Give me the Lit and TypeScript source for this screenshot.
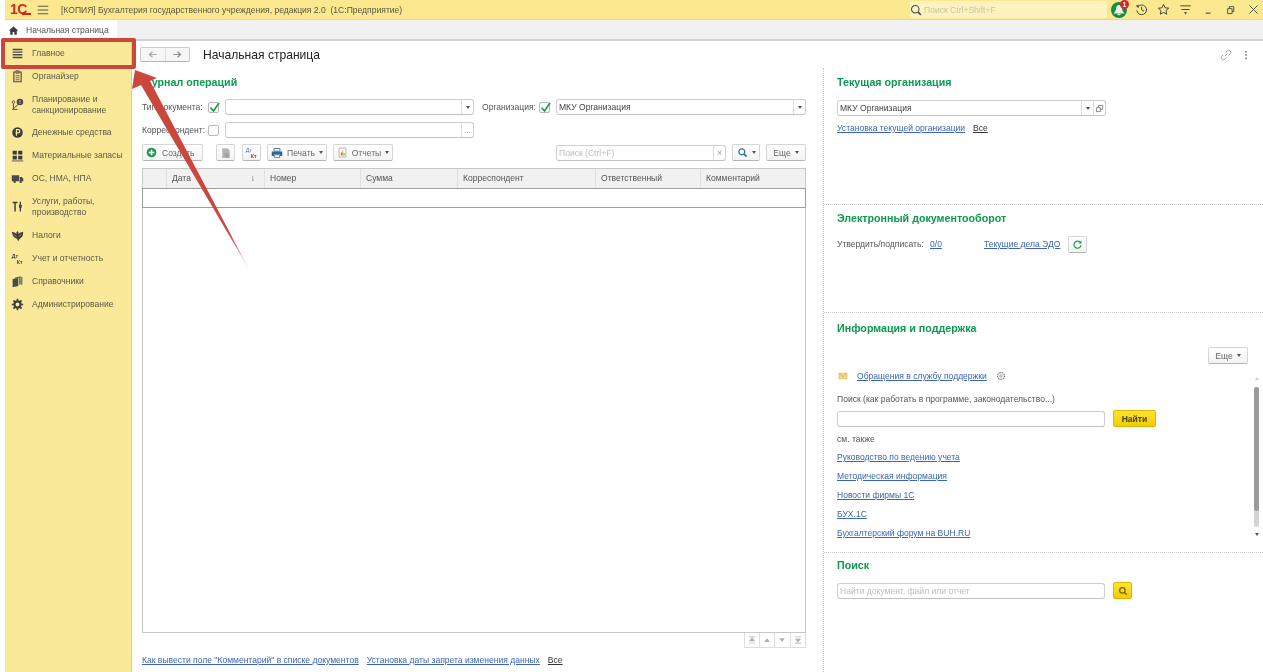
import { LitElement, html, css, svg } from 'lit';
import { customElement } from 'lit/decorators.js';

// small helper so every icon has the same svg wrapper
const ico = (size: number, body: unknown) => html`<svg class="ico" width=${size} height=${size} viewBox="0 0 16 16">${body}</svg>`;

const icons: Record<string, unknown> = {
  main: svg`<path d="M2 3h12M2 6.300h12M2 9.600h12M2 13h12" stroke="#4a4a4a" stroke-width="1.700"/>`,
  org: svg`<path d="M3.500 2.500h9v12h-9z" fill="none" stroke="#4a4a4a" stroke-width="1.400"/><path d="M6 1h4v3H6zM5.500 7h5M5.500 9.500h5M5.500 12h5" fill="none" stroke="#4a4a4a"/>`,
  plan: svg`<path d="M3 7v7M1.500 14H8M4 12l5-4" stroke="#4a4a4a" fill="none" stroke-width="1.200"/><circle cx="3" cy="5" r="1.600" fill="none" stroke="#4a4a4a"/><circle cx="11" cy="5" r="4" fill="#4a4a4a"/><path d="M11 2.800V5.500M11 6.200v1" stroke="#fbe99a"/>`,
  money: svg`<circle cx="8" cy="8" r="6.500" fill="#3d3d3d"/><path d="M6.700 12V4.500h2.200a1.900 1.900 0 0 1 0 4H5.500" fill="none" stroke="#fbe99a" stroke-width="1.400"/>`,
  stock: svg`<path d="M2 2h5.200v4.800H2zM8.800 2H14v4.800H8.800zM2 8.200h5.200V13H2zM8.800 8.200H14V13H8.800z" fill="#3d3d3d"/><path d="M1 14.700h14" stroke="#3d3d3d"/>`,
  truck: svg`<path d="M1 4h9v7.500H1zM10.800 6h2.700l1.700 2.500v3h-4.400z" fill="#4a4a4a"/><circle cx="4.500" cy="12" r="1.500" fill="#4a4a4a"/><circle cx="12" cy="12" r="1.500" fill="#4a4a4a"/>`,
  tools: svg`<path d="M2 3h6M5 3v11" stroke="#3d3d3d" stroke-width="1.800" fill="none"/><path d="M11.500 2v12" stroke="#3d3d3d" stroke-width="1.600"/><path d="M9.800 6h3.400v3.500H9.800z" fill="#3d3d3d"/>`,
  tax: svg`<path d="M8 2.500l1.300 1.500v2l1.700-1.500 4-1c0 5-1.500 7.500-4.500 8.500l-1 2.500h-1l-1-2.500C3.500 11 2 8.500 1 3.500l4 1L6.700 6V4z" fill="#3d3d3d"/><path d="M3.500 6.500l3 3M12.500 6.500l-3 3" stroke="#fbe99a" stroke-width=".6"/>`,
  acc: svg`<text x="1" y="7" font-size="6.500" font-weight="bold" font-family="Liberation Sans" fill="#444">Дт</text><text x="7" y="14.500" font-size="6.500" font-weight="bold" font-family="Liberation Sans" fill="#444">Кт</text>`,
  books: svg`<path d="M2 5l7-1.500v10L2 15z" fill="#4a4a4a"/><path d="M5 3l7-1.500v10l-2 .4V3.500L5 4.500zM12.500 2.500L14 2v10l-1.500.4z" fill="#6a6a6a"/>`,
  gear: svg`<circle cx="8" cy="8" r="3.800" fill="none" stroke="#3d3d3d" stroke-width="2.800"/><path d="M8 1v2.500M8 12.500V15M1 8h2.500M12.500 8H15M3 3l1.800 1.800M11.200 11.200L13 13M13 3l-1.800 1.800M4.800 11.200L3 13" stroke="#3d3d3d" stroke-width="2"/>`,
  home: svg`<path d="M8 2L1 8.500h2.200V14h3.600v-4h2.400v4h3.600V8.500H15z" fill="#3d3d3d"/>`,
  search: svg`<circle cx="7" cy="7" r="5" fill="none" stroke="#444" stroke-width="1.400"/><path d="M10.500 10.500L14.500 14.500" stroke="#444" stroke-width="2"/>`,
  searchBlue: svg`<circle cx="7" cy="7" r="4.300" fill="none" stroke="#2f6f9f" stroke-width="1.800"/><path d="M10 10L14 14" stroke="#2f6f9f" stroke-width="2.200"/>`,
  searchDark: svg`<circle cx="7" cy="7" r="4.300" fill="none" stroke="#7a6500" stroke-width="2"/><path d="M10 10L14 14" stroke="#7a6500" stroke-width="2.200"/>`,
  history: svg`<path d="M3.200 5a6 6 0 1 1-1 4" fill="none" stroke="#444" stroke-width="1.200"/><path d="M1 3.500l3.500 2.500-.2-3.800z" fill="#444"/><path d="M8.200 4.500v4l2.800 1.500" fill="none" stroke="#444" stroke-width="1.200"/>`,
  star: svg`<path d="M8 1.800l1.900 4.100 4.500.5-3.300 3 .9 4.400L8 11.600l-4 2.200.9-4.400-3.300-3 4.500-.5z" fill="none" stroke="#444" stroke-width="1.200"/>`,
  funnel: svg`<path d="M1.500 3.500h13M3 8h10" stroke="#444" stroke-width="1.200"/><path d="M6 11.500h4L8 14z" fill="#444"/>`,
  min: svg`<path d="M4.500 12.500h6" stroke="#444" stroke-width="1.300"/>`,
  restore: svg`<path d="M4.500 7h5.500v6H4.500zM6.500 7V4.500h5.500V10.500H10" fill="none" stroke="#444" stroke-width="1.100"/>`,
  close: svg`<path d="M3 3l10 10M13 3L3 13" stroke="#444" stroke-width="1.100"/>`,
  link: svg`<path d="M6.500 9.500l3-3M7.500 4.500l2-2a2.800 2.800 0 0 1 4 4l-2 2M8.500 11.500l-2 2a2.800 2.800 0 0 1-4-4l2-2" fill="none" stroke="#8a8a8a" stroke-width="1.100"/>`,
  dots: svg`<path d="M8 2.500v2M8 7v2M8 11.500v2" stroke="#555" stroke-width="1.800"/>`,
  left: svg`<path d="M14 8H4M8 4L3.500 8 8 12" fill="none" stroke="#a8a8a8" stroke-width="1.800"/>`,
  right: svg`<path d="M2 8h10M8 4l4.500 4L8 12" fill="none" stroke="#8f8f8f" stroke-width="1.800"/>`,
  plus: svg`<circle cx="8" cy="8" r="7" fill="#1f9d4d"/><path d="M8 4v8M4 8h8" stroke="#fff" stroke-width="2.400"/>`,
  save: svg`<path d="M3 1.500h7l3 3v10H3z" fill="#b4b4b4"/><circle cx="9" cy="11" r="3" fill="#97a897"/>`,
  dtkt: svg`<text x="1" y="7" font-size="6.500" font-family="Liberation Sans" fill="#3f74a8">Дт</text><text x="7" y="14.500" font-size="6.500" font-weight="bold" font-family="Liberation Sans" fill="#d02020">Кт</text>`,
  print: svg`<path d="M4 2h8v3.500H4z" fill="#fff" stroke="#30658f"/><path d="M1 6h14v6h-3v-2H4v2H1z" fill="#30658f"/><path d="M4.500 10.500h7V14h-7z" fill="#fff" stroke="#30658f"/>`,
  report: svg`<path d="M3 1.500h10v13H3z" fill="#fff" stroke="#9a9a9a"/><path d="M5.500 8h1.500v4.500H5.500z" fill="#d04040"/><path d="M7.500 5h1.500v7.500H7.500z" fill="#e0a020"/><path d="M9.500 9h1.500v3.500H9.500z" fill="#3f9a50"/>`,
  refresh: svg`<path d="M12.500 5.500A5.200 5.200 0 1 0 13.200 9" fill="none" stroke="#1f9d4d" stroke-width="1.700"/><path d="M13.800 2v4.500H9.500z" fill="#1f9d4d"/>`,
  copy: svg`<path d="M2.500 6.500h7v7h-7zM6 6.500V2.500h7.500v7H9.500" fill="none" stroke="#555" stroke-width="1.200"/>`,
  mail: svg`<path d="M1.500 3.500h13v9h-13z" fill="#f3d98a" stroke="#d9b45c"/><path d="M2 4l6 5 6-5" fill="none" stroke="#c79d43"/>`,
  settings: svg`<circle cx="8" cy="8" r="5.500" fill="none" stroke="#777" stroke-width="1.800" stroke-dasharray="2 1"/><circle cx="8" cy="8" r="2" fill="none" stroke="#777"/>`,
  first: svg`<path d="M3 3h10" stroke="#b0b0b0" stroke-width="1.500"/><path d="M8 4.500l4 5H4zM3 13h10" fill="#b0b0b0" stroke="#b0b0b0"/>`,
  up: svg`<path d="M8 5l4.500 6h-9z" fill="#b0b0b0"/>`,
  down: svg`<path d="M8 11L3.500 5h9z" fill="#b0b0b0"/>`,
  last: svg`<path d="M3 3h10M8 11.500l-4-5h8z" fill="#b0b0b0" stroke="#b0b0b0"/><path d="M3 13h10" stroke="#b0b0b0" stroke-width="1.500"/>`,
  bell: svg`<path d="M8 3c2 0 2.800 1.500 3 3.500.2 2 1 3.500 2.500 5h-11C4 10 4.800 8.500 5 6.500 5.200 4.500 6 3 8 3z" fill="#eef5e6"/><path d="M6.500 12.500h3" stroke="#eef5e6" stroke-width="1.200"/>`,
};

const navItems = [
  ['main', 'Главное', false],
  ['org', 'Органайзер', false],
  ['plan', 'Планирование и санкционирование', true],
  ['money', 'Денежные средства', false],
  ['stock', 'Материальные запасы', false],
  ['truck', 'ОС, НМА, НПА', false],
  ['tools', 'Услуги, работы, производство', true],
  ['tax', 'Налоги', false],
  ['acc', 'Учет и отчетность', false],
  ['books', 'Справочники', false],
  ['gear', 'Администрирование', false],
] as const;

const columns = ['', 'Дата', 'Номер', 'Сумма', 'Корреспондент', 'Ответственный', 'Комментарий'];
const supportLinks = ['Руководство по ведению учета', 'Методическая информация', 'Новости фирмы 1С', 'БУХ.1С', 'Бухгалтерский форум на BUH.RU'];

@customElement('app-root')
export class AppRoot extends LitElement {
  static styles = css`
    :host {
      display: block;
      position: relative;
      width: 1263px;
      height: 672px;
      overflow: hidden;
      background: #fff;
      font-family: 'Liberation Sans', Arial, sans-serif;
      font-size: 8.550px;
      color: #555;
      filter: blur(0.3px);
    }
    .ico { display: block; flex: none; }
    a { color: #3c64b4; text-decoration: underline; }
    a.all { color: #333; }

    /* title bar */
    .top {
      height: 19px;
      margin-left: 5px;
      display: flex;
      align-items: center;
      background: #fbe88f;
      border-bottom: 1px solid #f5d964;
    }
    .logo {
      width: 20px;
      margin-left: 5px;
      display: flex;
      align-items: flex-end;
      color: #d8281c;
      font-weight: bold;
      font-size: 14px;
      line-height: 11px;
      height: 11px;
      letter-spacing: -0.500px;
    }
    .logo::after { content: ''; width: 9px; height: 2px; margin-left: -5px; background: #d8281c; flex: none; }
    .burger { margin-left: 7px; }
    .apptitle { margin-left: 12px; color: #5a5640; flex: 1; white-space: nowrap; }
    .gsearch {
      width: 197px;
      height: 17px;
      box-sizing: border-box;
      display: flex;
      align-items: center;
      gap: 2px;
      background: #fdf3bf;
      border-radius: 2px;
      color: #c9c4a4;
    }
    .bell {
      position: relative;
      width: 16px;
      height: 16px;
      margin-left: 4px;
      border-radius: 50%;
      background: #0f8f45;
    }
    .badge {
      position: absolute;
      right: -2px;
      top: -2px;
      width: 9px;
      height: 9px;
      border-radius: 50%;
      background: #e3202a;
      color: #fff;
      font-size: 7px;
      font-weight: bold;
      line-height: 9px;
      text-align: center;
    }
    .wintools { display: flex; margin-left: 7.500px; margin-right: 3.500px; gap: 9.400px; }

    /* tab strip */
    .tabs {
      height: 19px;
      margin-left: 5px;
      display: flex;
      background: #f1f1f1;
      border-bottom: 2px solid #d2d2d2;
    }
    .tab {
      width: 112px;
      display: flex;
      align-items: center;
      gap: 7px;
      padding-left: 3px;
      box-sizing: border-box;
      background: #fff;
      margin-bottom: -1px;
    }

    .body { display: flex; height: 631px; margin-left: 5px; }

    /* left section panel */
    .side {
      width: 127px;
      flex: none;
      box-sizing: border-box;
      padding-top: 1px;
      background: #fbe99a;
      border-right: 1px solid #e0d07a;
      color: #5c5844;
    }
    .nav {
      min-height: 23px;
      display: flex;
      align-items: center;
      gap: 8px;
      padding: 0 6px 0 6px;
      line-height: 11px;
    }
    .nav.two { height: 33px; }
    .nav:nth-child(7) { margin-bottom: 1px; }

    .content { flex: 1; display: flex; flex-direction: column; min-width: 0; }
    .titlebar {
      height: 27px;
      padding-left: 8px;
      padding-right: 11px;
      display: flex;
      align-items: center;
    }
    .nav-btns {
      display: flex;
      width: 50px;
      height: 15px;
      border: 1px solid #ccc;
      border-bottom-color: #b5b5b5;
      border-radius: 2px;
      box-sizing: border-box;
      background: #f6f6f6;
    }
    .nav-btns span { flex: 1; display: flex; align-items: center; justify-content: center; }
    .nav-btns span + span { border-left: 1px solid #ddd; }
    .page-title { margin-left: 13px; font-size: 12.100px; color: #222; flex: 1; }
    .pagetools { display: flex; gap: 8px; }

    .columns { flex: 1; display: flex; min-height: 0; }
    .left { width: 691px; box-sizing: border-box; padding: 0 17px 0 10px; }
    .right {
      flex: 1;
      border-left: 1px dotted #ccc;
      display: flex;
      flex-direction: column;
      padding-left: 13px;
      min-width: 0;
    }
    h2 {
      margin: 0;
      font-size: 10.700px;
      line-height: 14px;
      font-weight: bold;
      color: #0b9a50;
    }
    .left h2 { margin-top: 7px; }

    /* inputs */
    .row { display: flex; align-items: center; margin-top: 10px; height: 16px; }
    .row + .row { margin-top: 7px; }
    .label { width: 66px; white-space: nowrap; flex: none; }
    .label.org { width: 57px; margin-left: 8px; }
    .check {
      width: 11px;
      height: 11px;
      flex: none;
      box-sizing: border-box;
      border: 1px solid #b9b9b9;
      border-radius: 2px;
      background: #fff;
      margin-right: 6px;
      position: relative;
    }
    .check svg { position: absolute; left: -1px; top: -2px; }
    .field {
      height: 16px;
      box-sizing: border-box;
      border: 1px solid #cfcfcf;
      border-bottom-color: #c2c2c2;
      border-radius: 3px;
      background: #fff;
      display: flex;
      align-items: center;
      flex: none;
      color: #444;
    }
    .field .val { flex: 1; padding-left: 2px; white-space: nowrap; overflow: hidden; }
    .field .ph { color: #bdbdbd; }
    .field .add {
      width: 12px;
      height: 100%;
      border-left: 1px solid #dedede;
      display: flex;
      align-items: center;
      justify-content: center;
      flex: none;
      color: #999;
      box-sizing: border-box;
    }
    .caret { width: 0; height: 0; border: 2px solid transparent; border-top: 3px solid #555; border-bottom: 0; display: inline-block; flex: none; }
    .caret.up { border-top: 0; border-bottom: 3px solid #ccc; }
    .w249 { width: 249px; }
    .w250 { width: 250px; }
    .w170 { width: 170px; }
    .w269 { width: 269px; }
    .w268 { width: 268px; }

    /* buttons */
    .toolbar { display: flex; align-items: center; margin-top: 6px; height: 17px; gap: 6px; }
    .btn {
      height: 17px;
      box-sizing: border-box;
      border: 1px solid #d6d6d6;
      border-bottom-color: #b4b4b4;
      border-radius: 2px;
      background: linear-gradient(#fff, #f3f3f3);
      display: flex;
      align-items: center;
      justify-content: center;
      gap: 4px;
      flex: none;
      color: #666;
    }
    .w61 { width: 61px; justify-content: flex-start; padding-left: 3px; gap: 5px; }
    .w19 { width: 19px; }
    .w60 { width: 60px; }
    .w28 { width: 28px; }
    .w40 { width: 40px; }
    .w43 { width: 43px; }
    .gap-l { margin-left: 7px; }
    .gap-s { margin-left: 1px; }
    .spacer { flex: 1; }
    .yellow {
      background: linear-gradient(#fde332, #f2cc05);
      border-color: #d9b800;
      color: #4a4300;
      font-weight: bold;
    }

    /* grid */
    .grid {
      margin-top: 7px;
      height: 465px;
      box-sizing: border-box;
      border: 1px solid #c8c8c8;
      display: flex;
      flex-direction: column;
    }
    .grid-head {
      display: grid;
      grid-template-columns: 23px 98px 96px 97px 138px 105px 1fr;
      height: 19px;
      background: #f1f1f1;
    }
    .grid-head span {
      display: flex;
      align-items: center;
      justify-content: space-between;
      padding: 0 9px 2px 5px;
      border-left: 1px solid #e0e0e0;
    }
    .grid-head span:first-child { border-left: 0; }
    .grid-row { height: 20px; box-sizing: border-box; border: 1px solid #9f9f9f; margin: 0 -1px; }
    .pager {
      display: flex;
      justify-content: flex-end;
      height: 15px;
    }
    .pager span {
      width: 15.500px;
      box-sizing: border-box;
      border: 1px solid #ddd;
      border-top: 0;
      border-left-width: 0;
      display: flex;
      align-items: center;
      justify-content: center;
    }
    .pager span:first-child { border-left-width: 1px; }
    .links { display: flex; gap: 8px; margin-top: 5px; height: 14px; align-items: center; white-space: nowrap; }

    /* right column blocks */
    .block { box-sizing: border-box; border-bottom: 1px dotted #ccc; margin-left: -13px; padding-left: 13px; }
    .b1 { height: 137px; padding-top: 7px; }
    .b2 { height: 108px; padding-top: 6px; }
    .b3 { height: 240px; padding-top: 8px; display: flex; flex-direction: column; }
    .b4 { flex: 1; padding-top: 5px; border-bottom: 0; }
    .combo-row { display: flex; margin-top: 11px; }
    .linkrow { display: flex; gap: 8px; margin-top: 7px; line-height: 11px; }
    .edo { display: flex; align-items: center; margin-top: 10px; height: 18px; }
    .edo .c1 { width: 93px; }
    .edo .c2 { width: 54px; }
    .edo .c3 { width: 84px; }
    .more-row { display: flex; justify-content: flex-end; margin-top: 12px; margin-right: 15px; }
    .support { flex: 1; display: flex; min-height: 0; }
    .support-main { flex: 1; }
    .mailrow { display: flex; align-items: center; margin-top: 5px; height: 14px; gap: 9px; padding-left: 1px; }
    .search-label { margin-top: 10px; line-height: 12px; }
    .search-row { display: flex; gap: 8px; margin-top: 5px; align-items: center; }
    .also { margin-top: 6px; line-height: 12px; }
    .supp-links { margin-top: 7px; display: flex; flex-direction: column; gap: 8px; line-height: 11px; }
    .scroll { width: 5px; margin-right: 4px; margin-top: 13px; display: flex; flex-direction: column; align-items: center; }
    .track { height: 140px; width: 5px; margin-top: 7px; background: #d4d4d4; border-radius: 3px; flex: none; }
    .thumb { height: 124px; width: 5px; background: #9a9a9a; border-radius: 3px; }
    .scroll .down { margin-top: 6px; }
    .b4 .search-row { margin-top: 10px; }

    /* annotation drawn over the screenshot */
    .callout {
      position: absolute;
      left: 1px;
      top: 38px;
      width: 135px;
      height: 31px;
      box-sizing: border-box;
      border: 4px solid #c9473b;
      border-radius: 2px;
    }
    .arrow { position: absolute; left: 0; top: 0; pointer-events: none; }
  `;

  render() {
    return html`
      <div class="top">
        <div class="logo">1С</div>
        <span class="burger">${ico(12, svg`<path d="M1 3h14M1 8h14M1 13h14" stroke="#555" stroke-width="1.300"/>`)}</span>
        <div class="apptitle">[КОПИЯ] Бухгалтерия государственного учреждения, редакция 2.0 &nbsp;(1С:Предприятие)</div>
        <div class="gsearch">${ico(12, icons.search)}<span>Поиск Ctrl+Shift+F</span></div>
        <div class="bell">${ico(16, icons.bell)}<span class="badge">1</span></div>
        <div class="wintools">
          ${['history', 'star', 'funnel', 'min', 'restore', 'close'].map((n) => ico(13, icons[n]))}
        </div>
      </div>
      <div class="tabs">
        <div class="tab">${ico(11, icons.home)}<span>Начальная страница</span></div>
      </div>
      <div class="body">
        <div class="side">
          ${navItems.map(([icon, label, two]) => html`
            <div class="nav ${two ? 'two' : ''}">${ico(13, icons[icon])}<span>${label}</span></div>
          `)}
        </div>
        <div class="content">
          <div class="titlebar">
            <div class="nav-btns"><span>${ico(11, icons.left)}</span><span>${ico(11, icons.right)}</span></div>
            <div class="page-title">Начальная страница</div>
            <div class="pagetools">${ico(12, icons.link)}${ico(12, icons.dots)}</div>
          </div>
          <div class="columns">
            <div class="left">
              <h2>Журнал операций</h2>
              <div class="row">
                <span class="label">Тип документа:</span>
                ${this.checkbox(true)}
                ${this.field('', 'w249', html`<span class="caret"></span>`)}
                <span class="label org">Организация:</span>
                ${this.checkbox(true)}
                ${this.field('МКУ Организация', 'w250', html`<span class="caret"></span>`)}
              </div>
              <div class="row">
                <span class="label">Корреспондент:</span>
                ${this.checkbox(false)}
                ${this.field('', 'w249', html`...`)}
              </div>
              <div class="toolbar">
                <div class="btn w61">${ico(11, icons.plus)}<span>Создать</span></div>
                <div class="btn w19 gap-l">${ico(12, icons.save)}</div>
                <div class="btn w19 gap-s">${ico(13, icons.dtkt)}</div>
                <div class="btn w60">${ico(12, icons.print)}<span>Печать</span><span class="caret"></span></div>
                <div class="btn w60">${ico(11, icons.report)}<span>Отчеты</span><span class="caret"></span></div>
                <div class="spacer"></div>
                <div class="field w170"><span class="val ph">Поиск (Ctrl+F)</span><span class="add">×</span></div>
                <div class="btn w28">${ico(11, icons.searchBlue)}<span class="caret"></span></div>
                <div class="btn w40"><span>Еще</span><span class="caret"></span></div>
              </div>
              <div class="grid">
                <div class="grid-head">
                  ${columns.map((c, i) => html`<span>${c}${i === 1 ? html`<b>↓</b>` : ''}</span>`)}
                </div>
                <div class="grid-row"></div>
              </div>
              <div class="pager">
                ${['first', 'up', 'down', 'last'].map((n) => html`<span>${ico(10, icons[n])}</span>`)}
              </div>
              <div class="links">
                <a>Как вывести поле "Комментарий" в списке документов</a>
                <a>Установка даты запрета изменения данных</a>
                <a class="all">Все</a>
              </div>
            </div>
            <div class="right">
              <div class="block b1">
                <h2>Текущая организация</h2>
                <div class="combo-row">
                  ${this.field('МКУ Организация', 'w269', html`<span class="caret"></span>`, html`<span class="add">${ico(9, icons.copy)}</span>`)}
                </div>
                <div class="linkrow"><a>Установка текущей организации</a><a class="all">Все</a></div>
              </div>
              <div class="block b2">
                <h2>Электронный документооборот</h2>
                <div class="edo">
                  <span class="c1">Утвердить/подписать:</span>
                  <span class="c2"><a>0/0</a></span>
                  <span class="c3"><a>Текущие дела ЭДО</a></span>
                  <div class="btn w19">${ico(11, icons.refresh)}</div>
                </div>
              </div>
              <div class="block b3">
                <h2>Информация и поддержка</h2>
                <div class="more-row"><div class="btn w40"><span>Еще</span><span class="caret"></span></div></div>
                <div class="support">
                  <div class="support-main">
                    <div class="mailrow">${ico(10, icons.mail)}<a>Обращения в службу поддержки</a>${ico(10, icons.settings)}</div>
                    <div class="search-label">Поиск (как работать в программе, законодательство...)</div>
                    <div class="search-row">
                      <div class="field w268"></div>
                      <div class="btn yellow w43">Найти</div>
                    </div>
                    <div class="also">см. также</div>
                    <div class="supp-links">${supportLinks.map((l) => html`<a>${l}</a>`)}</div>
                  </div>
                  <div class="scroll">
                    <span class="caret up"></span>
                    <div class="track"><div class="thumb"></div></div>
                    <span class="caret down"></span>
                  </div>
                </div>
              </div>
              <div class="block b4">
                <h2>Поиск</h2>
                <div class="search-row">
                  <div class="field w268"><span class="val ph">Найти документ, файл или отчет</span></div>
                  <div class="btn yellow w19">${ico(10, icons.searchDark)}</div>
                </div>
              </div>
            </div>
          </div>
        </div>
      </div>
      <div class="callout"></div>
      <svg class="arrow" width="300" height="300" viewBox="0 0 300 300">
        <defs>
          <linearGradient id="fade" x1="140" y1="80" x2="250" y2="271" gradientUnits="userSpaceOnUse">
            <stop offset="0.8" stop-color="#c9473b"/>
            <stop offset="1" stop-color="#c9473b" stop-opacity="0.1"/>
          </linearGradient>
        </defs>
        <path d="M135 70L157 78L150 81L250 271L141 85L132 89Z" fill="url(#fade)"/>
      </svg>
    `;
  }

  checkbox(on: boolean) {
    return html`<span class="check">${on ? html`<svg width="13" height="13" viewBox="0 0 13 13"><path d="M2.500 6.500l3 3.500 5.500-8" fill="none" stroke="#129a46" stroke-width="1.600"/></svg>` : ''}</span>`;
  }

  field(value: string, width: string, addon?: unknown, addon2?: unknown) {
    return html`<div class="field ${width}">
      <span class="val">${value}</span>
      ${addon ? html`<span class="add">${addon}</span>` : ''}
      ${addon2 ?? ''}
    </div>`;
  }
}
